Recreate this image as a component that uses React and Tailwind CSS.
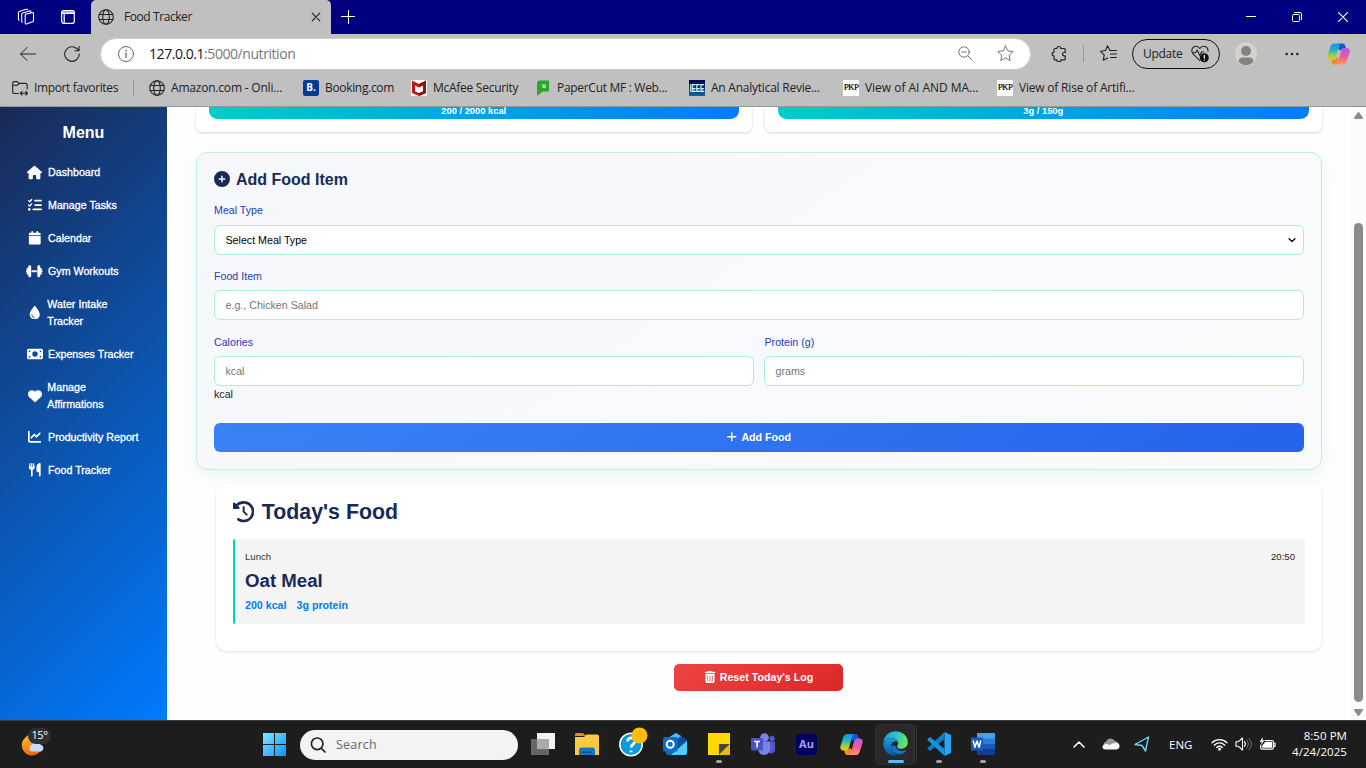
import React from 'react';
import {
  FaHouse, FaListCheck, FaCalendar, FaDumbbell, FaDroplet, FaMoneyBill, FaHeart, FaChartLine,
  FaUtensils, FaCirclePlus, FaClockRotateLeft, FaPlus, FaTrashCan,
} from 'react-icons/fa6';

const line = { fill: 'none', stroke: 'currentColor', strokeLinecap: 'round', strokeLinejoin: 'round' };

function Globe() {
  return (
    <svg className="h-4 w-4 shrink-0 text-[#222]" viewBox="0 0 16 16" {...line} strokeWidth="1.1">
      <circle cx="8" cy="8" r="7.3" />
      <ellipse cx="8" cy="8" rx="3.3" ry="7.3" />
      <path d="M1.2 5.5h13.6M1.2 10.5h13.6" />
    </svg>
  );
}

function CopilotIcon({ id, className }) {
  return (
    <svg className={className} viewBox="0 0 24 24">
      <defs>
        <linearGradient id={id + 'a'} x1="0" y1="0" x2="0" y2="1">
          <stop offset="0" stopColor="#1b8df0" /><stop offset=".4" stopColor="#22b5c0" />
          <stop offset=".75" stopColor="#a9cf3c" /><stop offset="1" stopColor="#f5c518" />
        </linearGradient>
        <linearGradient id={id + 'b'} x1="0" y1="0" x2="0" y2="1">
          <stop offset="0" stopColor="#a95cf0" /><stop offset=".5" stopColor="#ee5a9c" />
          <stop offset="1" stopColor="#ff9a55" />
        </linearGradient>
      </defs>
      <path d="M12 1h4.200c1.500 0 2.300.8 2.700 2.200l1 3.300h-3c-1.500 0-2.500.7-3 2.200L12 7z" fill="#1555c8" />
      <path d="M12 23H7.800c-1.500 0-2.300-.8-2.700-2.200l-1-3.300h3c1.500 0 2.500-.7 3-2.200L12 17z" fill="#f08a30" />
      <path d="M8 1h7.500c-1.500.2-2.300 1-2.700 2.500L9.300 15.300c-.6 2-1.500 2.900-3.300 2.900H3.700C.8 18.200-.3 16 .6 13.300L3.600 4c.7-2 2.200-3 4.400-3z" fill={`url(#${id}a)`} />
      <path d="M16 23H8.500c1.500-.2 2.300-1 2.700-2.500l3.500-11.800c.6-2 1.500-2.900 3.300-2.900h2.300c2.900 0 4 2.200 3.100 4.900l-3 9.300c-.7 2-2.200 3-4.400 3z" fill={`url(#${id}b)`} />
    </svg>
  );
}

function TitleBar() {
  return (
    <div className="flex h-[34px] items-center bg-[#000080] text-white">
      <svg className="ml-[17px] h-[18px] w-[18px]" viewBox="0 0 18 18" {...line} strokeWidth="1.1">
        <path d="M8.300 6.200 15 4.600c.8-.2 1.500.2 1.500 1v6.800c0 .7-.4 1.200-1 1.400l-6 2.200c-.8.200-1.300-.2-1.300-1V7.300c0-.6.3-1 .9-1.200z" />
        <path d="M5.500 14.200c-.5-.1-.8-.5-.8-1V6.300c0-.6.4-1 1-1.200l6.800-2.200c.7-.2 1.200 0 1.400.6" />
        <path d="M2.300 12.200c-.5-.1-.9-.4-.9-1V4.700c0-.6.3-1 .9-1.200L9 1.300c.7-.2 1.200 0 1.500.5" />
      </svg>
      <svg className="ml-[26px] h-[14px] w-[14px]" viewBox="0 0 14 14" {...line} strokeWidth="1.2">
        <rect x=".7" y=".7" width="12.600" height="12.600" rx="2" />
        <path d="M1 2.200h12M1 3.500h12M3.200 4v9" />
      </svg>
      <div className="ml-[16px] flex h-[34px] w-[240px] items-center rounded-t-[5px] bg-[#c0c0c0] pl-[7px] pr-[10px] text-[#222]">
        <Globe />
        <span className="ml-[10px] text-[12px] tracking-[-0.42px]">Food Tracker</span>
        <svg className="ml-auto h-[10px] w-[10px]" viewBox="0 0 10 10" {...line} strokeWidth="1.2"><path d="m1.200 1.200 7.600 7.600m0-7.600L1.200 8.800" /></svg>
      </div>
      <svg className="ml-[10px] h-[14px] w-[14px]" viewBox="0 0 14 14" {...line} strokeWidth="1.1"><path d="M7.500.5v13M.5 6.500h13" /></svg>
      <svg className="ml-auto h-[10px] w-[10px]" viewBox="0 0 10 10" {...line}><path d="M0 4.500h10" /></svg>
      <svg className="ml-[36px] h-[10px] w-[10px]" viewBox="0 0 10 10" {...line}>
        <rect x=".5" y="2.500" width="7" height="7" rx="1" /><path d="M2.500.5H8A1.500 1.500 0 0 1 9.500 2v5.500" />
      </svg>
      <svg className="ml-[36px] mr-[18px] h-[10px] w-[10px]" viewBox="0 0 10 10" {...line} strokeWidth="1.100"><path d="m.3.3 9.400 9.400m0-9.400L.3 9.700" /></svg>
    </div>
  );
}

function Toolbar() {
  return (
    <div className="flex h-[39px] items-center bg-[#c0c0c0] text-[#222]">
      <svg className="ml-[20px] h-4 w-4" viewBox="0 0 16 16" {...line} strokeWidth="1"><path d="M15.500 8H.8M7 1.500.6 8 7 14.500" /></svg>
      <svg className="ml-[28px] h-4 w-4" viewBox="0 0 16 16" {...line} strokeWidth="1.100"><path d="M15.300 8A7.300 7.300 0 1 1 12.800 2.500L15 4.600M15 .5v4.200h-4.200" /></svg>
      <div className="ml-[20px] flex h-[32px] w-[931px] items-center rounded-full border border-[#d0d0d0] bg-white pl-[17px] pr-[16px] text-[#666]">
        <svg className="h-4 w-4" viewBox="0 0 16 16" {...line}><circle cx="8" cy="8" r="7.500" /><path d="M8 7.200v4.300" strokeWidth="1.300" /><path d="M8 4.600v.1" strokeWidth="1.600" /></svg>
        <span className="ml-[15px] text-[14px] tracking-[-0.44px] text-[#777]"><span className="text-[#111]">127.0.0.1</span>:5000/nutrition</span>
        <svg className="ml-auto h-[15px] w-[15px]" viewBox="0 0 15 15" {...line} strokeWidth="0.900"><circle cx="6" cy="6" r="5.200" /><path d="m9.800 9.800 4.500 4.500M3.700 6h4.600" /></svg>
        <svg className="ml-[24px] h-[17px] w-[17px]" viewBox="0 0 17 17" {...line} strokeWidth="0.900"><path d="m8.500.9 2.300 4.900 5.400.7-4 3.700 1 5.300-4.700-2.600-4.700 2.600 1-5.300-4-3.700 5.400-.7z" /></svg>
      </div>
      <svg className="ml-[20px] h-[17px] w-[17px]" viewBox="0 0 17 17" {...line} strokeWidth="1.200">
        <path d="M5.800 3.500a2 2 0 0 1 4 0h3.400c.6 0 1 .4 1 1v3h-1a1.700 1.700 0 0 0 0 3.400h1v3c0 .6-.4 1-1 1H9.800a2 2 0 0 1-4 0H4c-.6 0-1-.4-1-1v-3a1.900 1.900 0 0 1 0-3.800V4.500c0-.6.400-1 1-1z" />
      </svg>
      <div className="ml-[15px] h-[17px] w-px bg-[#999]" />
      <svg className="ml-[16px] h-[17px] w-[17px]" viewBox="0 0 17 17" {...line} strokeWidth="1.100">
        <path d="M10 5.500 7.500.8 5.500 5.500.6 6.300l3.600 3.600-.9 5.300 4.300-2.300M10 5.500h6.500M10.500 9h6M10.500 12.500h6" />
      </svg>
      <div className="ml-[15px] flex h-[30px] w-[88px] items-center rounded-full border border-[#111] pl-[10px]">
        <span className="text-[12px] tracking-[-0.3px]">Update</span>
        <svg className="ml-[9px] h-[18px] w-[18px]" viewBox="0 0 18 18" {...line} strokeWidth="1.100">
          <path d="M8.800 15.600 2.300 9.200C-.5 6.200 1 1.500 4.800 1.200c1.800-.1 3.200.9 4 2.300.8-1.400 2.300-2.400 4.200-2.300 2.600.2 4.300 2.500 4 5M2 7.800h2.500L6.200 5l2.600 5.500L10.600 7h2" />
          <circle cx="13.300" cy="12.800" r="4.500" fill="#111" stroke="none" /><path d="M13.300 10.300v2.800m0 2v.1" stroke="white" strokeWidth="1.200" />
        </svg>
      </div>
      <svg className="ml-[15px] h-[24px] w-[22px]" viewBox="0 0 22 24">
        <ellipse cx="11" cy="12" rx="11" ry="12" fill="#d5d2ce" /><circle cx="11" cy="9" r="5" fill="#87827d" />
        <path d="M3.500 19.500c0-3 2.500-4 4-4h7c1.500 0 4 1 4 4-4 5-11 5-15 0z" fill="#87827d" />
      </svg>
      <svg className="ml-[28px] h-[4px] w-[14px]" viewBox="0 0 14 4" fill="#222"><circle cx="1.700" cy="2" r="1.300" /><circle cx="7" cy="2" r="1.300" /><circle cx="12.300" cy="2" r="1.300" /></svg>
      <CopilotIcon id="ct" className="ml-[28px] h-[24px] w-[23px]" />
    </div>
  );
}

function Favorite({ icon, label, className, track }) {
  return (
    <div className={`flex shrink-0 items-center gap-[6px] ${className}`}>
      {icon}
      <span className={`whitespace-nowrap ${track}`}>{label}</span>
    </div>
  );
}

const pkp = <span className="flex h-4 w-4 shrink-0 items-center justify-center bg-white font-['Liberation_Serif',serif] text-[9px] tracking-[-0.6px] text-black [-webkit-text-stroke:0.2px_black]">PKP</span>;

function FavoritesBar() {
  return (
    <div className="flex h-[33px] items-center bg-[#c0c0c0] pb-[4px] text-[12px] text-[#222]">
      <Favorite className="ml-[12px] w-[121px]" track="tracking-[-0.37px]" label="Import favorites" icon={
        <svg className="h-4 w-4 shrink-0" viewBox="0 0 16 16" {...line} strokeWidth="1.100">
          <path d="M6.500 13.500H2.300c-1 0-1.600-.6-1.600-1.600V3.200c0-1 .6-1.600 1.600-1.600H5l2 1.800h6.500c1 0 1.700.6 1.700 1.600v4M.8 5.300h4.400L7 3.500M8.500 13.200h7M10 11.500l-1.700 1.700L10 15M13.800 11.500l1.700 1.700-1.700 1.800" />
        </svg>} />
      <div className="h-4 w-px bg-[#999]" />
      <Favorite className="ml-[15px] w-[154px]" track="tracking-[-0.2px]" label="Amazon.com - Onli..." icon={<Globe />} />
      <Favorite className="w-[108px]" track="tracking-[-0.33px]" label="Booking.com" icon={<span className="flex h-4 w-4 shrink-0 items-center justify-center rounded-[2px] bg-[#003b95] text-[10px] font-bold text-white">B.</span>} />
      <Favorite className="w-[124px]" track="tracking-[-0.27px]" label="McAfee Security" icon={
        <svg className="h-4 w-4 shrink-0" viewBox="0 0 16 16"><path fill="#fff" d="M0 0h16v16H0z" /><path fill="#c01818" d="m1 .5 7 3.500 7-3.500V13l-7 3-7-3z" /><path fill="#8b1010" d="M15 .5 8 4v12l7-3z" /><path fill="#fff" d="M4 5.500 8 7.500l4-2v5.800L8 13l-4-1.700z" /></svg>} />
      <Favorite className="w-[154px]" track="tracking-[-0.3px]" label="PaperCut MF : Web..." icon={
        <svg className="h-4 w-4 shrink-0" viewBox="0 0 16 16"><path fill="#2aa82a" fillRule="evenodd" d="M4.500.5H14v11H8L2 15.800V3C2 1.500 3 .5 4.500.5zm2.700 3.700v3.900h3.600V4.200z" /></svg>} />
      <Favorite className="w-[154px]" track="tracking-[-0.24px]" label="An Analytical Revie..." icon={
        <svg className="h-4 w-4 shrink-0" viewBox="0 0 16 16">
          <defs><linearGradient id="ieee" x1="0" y1="0" x2="0" y2="1"><stop stopColor="#000048" /><stop offset="1" stopColor="#006aa0" /></linearGradient></defs>
          <path d="M0 0h16v16H0z" fill="url(#ieee)" />
          <text x="8" y="11.500" textAnchor="middle" textLength="14.500" lengthAdjust="spacingAndGlyphs" fontFamily="Liberation Sans, sans-serif" fontWeight="700" fontSize="10" fill="white">IEEE</text>
        </svg>} />
      <Favorite className="w-[154px]" track="tracking-[-0.03px]" label="View of AI AND MA..." icon={pkp} />
      <Favorite className="w-[154px]" track="tracking-[-0.2px]" label="View of Rise of Artifi..." icon={pkp} />
    </div>
  );
}

const menu = [
  [FaHouse, 'Dashboard', 'text-[15px]'],
  [FaListCheck, 'Manage Tasks', 'text-[14px]'],
  [FaCalendar, 'Calendar', 'text-[13.500px]'],
  [FaDumbbell, 'Gym Workouts', 'text-[16.500px] stroke-[14]'],
  [FaDroplet, 'Water Intake Tracker', 'text-[13.500px]'],
  [FaMoneyBill, 'Expenses Tracker', 'text-[16px]'],
  [FaHeart, 'Manage Affirmations', 'text-[14px]'],
  [FaChartLine, 'Productivity Report', 'text-[13.500px]'],
  [FaUtensils, 'Food Tracker', 'text-[13.500px]'],
];

function Sidebar() {
  return (
    <nav className="w-[167px] shrink-0 bg-[linear-gradient(135deg,#192a56,#007bff)] text-white">
      <h2 className="pt-[15px] text-center text-[16px] font-bold leading-[22px]">Menu</h2>
      <ul className="mt-[12px] pl-[27px]">
        {menu.map(([Icon, label, size]) => (
          <li key={label} className="flex items-center py-[8px]">
            <span className="mb-[1px] flex h-[16px] w-[15px] shrink-0 items-center justify-center"><Icon className={`shrink-0 ${size}`} /></span>
            <span className={`w-[96px] text-[10.670px] leading-[17px] tracking-[0.02px] [-webkit-text-stroke:0.3px_white] ${label.length > 18 && label !== 'Productivity Report' ? 'ml-[5.300px]' : 'ml-[6px]'}`}>{label}</span>
          </li>
        ))}
      </ul>
    </nav>
  );
}

function Progress({ label }) {
  return (
    <div className="min-w-0 flex-1 rounded-b-[6px] bg-white px-[13px] shadow-[0_1px_3px_rgba(0,0,0,0.16)]">
      <div className="h-[12px] rounded-b-[8.500px] bg-[linear-gradient(90deg,#00cec9,#007bff)] text-center text-[9.330px] font-bold leading-[9px] text-white">{label}</div>
    </div>
  );
}

const box = 'flex h-[30px] items-center rounded-[6px] border border-[#a7f3d0] bg-white px-[10.500px] text-[10.670px] leading-[16px]';
const labelCls = 'h-[15px] text-[10.670px] leading-[15px] text-[#1e40af]';

function FoodForm() {
  return (
    <section className="mt-[20px] h-[318px] rounded-[11px] border border-[#c6ece1] bg-[linear-gradient(145deg,#f5f7fb,#f8fafc)] px-[17px] shadow-[0_5px_17px_rgba(16,185,129,0.1)]">
      <h3 className="flex h-[20px] items-center text-[16px] font-bold leading-[20px] text-[#192a56] mt-[16px]">
        <FaCirclePlus className="mr-[6px]" /><span className="pt-[1px]">Add Food Item</span>
      </h3>
      <div className={`mt-[14px] ${labelCls}`}>Meal Type</div>
      <div className={`mt-[7px] justify-between text-black ${box}`}>
        Select Meal Type
        <svg className="mr-[-3px] h-[5px] w-[8px]" viewBox="0 0 8 5" {...line} strokeWidth="1.200"><path d="m1 .7 3 2.800 3-2.800" /></svg>
      </div>
      <div className={`mt-[14px] ${labelCls}`}>Food Item</div>
      <div className={`mt-[6px] text-[#757575] ${box}`}>e.g., Chicken Salad</div>
      <div className="mt-[15px] grid grid-cols-2 gap-[10px]">
        <div>
          <div className={labelCls}>Calories</div>
          <div className={`mt-[6px] text-[#757575] ${box}`}>kcal</div>
          <div className="text-[10.670px] leading-[16px] text-[#222]">kcal</div>
        </div>
        <div>
          <div className={`pl-[0.500px] ${labelCls}`}>Protein (g)</div>
          <div className={`mt-[6px] text-[#757575] ${box}`}>grams</div>
        </div>
      </div>
      <div className="mt-[21px] flex h-[29px] items-center justify-center rounded-[6px] bg-[linear-gradient(145deg,#3b82f6,#2563eb)] pb-[1px] pr-[1px] text-[10.670px] font-bold text-white">
        <FaPlus className="mr-[4px] text-[11.500px]" />Add Food
      </div>
    </section>
  );
}

function FoodLog() {
  return (
    <section className="ml-[20px] mt-[13px] h-[168px] rounded-[11px] bg-white px-[17px] shadow-[0_1px_3px_rgba(0,0,0,0.12)]">
      <h2 className="flex items-center pt-[15px] text-[21.330px] font-bold leading-[28px] text-[#192a56]">
        <FaClockRotateLeft className="mr-[7.500px]" /><span className="whitespace-nowrap">Today&apos;s Food</span>
      </h2>
      <div className="mt-[13px] h-[85px] rounded-[2px] border-l-2 border-[#00cec9] bg-[#f4f4f4] pl-[10px] pr-[10px] pt-[10px]">
        <div className="flex justify-between text-[9.600px] leading-[15px] text-[#333]"><span>Lunch</span><span className="text-[#222]">20:50</span></div>
        <div className="mt-[5px] text-[18.670px] font-bold leading-[24px] text-[#192a56]">Oat Meal</div>
        <div className="mt-[4px] flex gap-[10px] text-[10.670px] font-bold leading-[16px] text-[#007bff]"><span>200 kcal</span><span>3g protein</span></div>
      </div>
    </section>
  );
}

function Page() {
  return (
    <div className="flex h-[613px] overflow-hidden font-['Liberation_Sans',Arial,sans-serif]">
      <Sidebar />
      <main className="min-w-0 flex-1 bg-[#fefefe] pl-[29px] pr-[29px]">
        <div className="ml-[-0.500px] mr-[0.500px] flex h-[25px] gap-[13px]"><Progress label="200 / 2000 kcal" /><Progress label="3g / 150g" /></div>
        <FoodForm />
        <FoodLog />
        <div className="ml-[478px] mt-[13px] flex h-[27px] w-[169px] items-center justify-center rounded-[5px] bg-[linear-gradient(145deg,#ef4444,#dc2626)] pb-[1px] text-[10.670px] font-bold text-white">
          <FaTrashCan className="mr-[4px] text-[12px]" />Reset Today&apos;s Log
        </div>
      </main>
      <div className="flex w-[15px] shrink-0 flex-col items-center bg-[#fcfcfc] text-[#8b8b8b]">
        <svg className="mt-[5px] h-[7px] w-[9px]" viewBox="0 0 9 7" fill="currentColor"><path d="M3.700.6a1 1 0 0 1 1.600 0L8.800 5.500c.4.700 0 1.500-.8 1.500H1C.2 7-.2 6.200.2 5.500z" /></svg>
        <div className="mt-[104px] h-[479px] w-[9px] rounded-full bg-[#8b8b8b]" />
        <svg className="mt-[7px] h-[7px] w-[9px]" viewBox="0 0 9 7" fill="currentColor"><path d="M3.700 6.400a1 1 0 0 0 1.600 0l3.500-4.900C9.200.8 8.800 0 8 0H1C.2 0-.2.8.2 1.500z" /></svg>
      </div>
    </div>
  );
}

const apps = [
  ['task', <><path d="M6 1h18v16H6z" fill="#f3f3f3" /><path d="M0 7h18v16H0z" fill="#666" /><path d="M6 7h12v10H6z" fill="#aaa" /></>],
  ['files', <><path d="M0 2.500C0 1.700.7 1 1.500 1H8l3 3H0z" fill="#d8950b" /><path d="M0 5h9l2.500-2.500H22A2 2 0 0 1 24 4.500V23H0z" fill="#fcc944" /><path d="M4 23v-5a2.500 2.500 0 0 1 2.500-2.500h11A2.500 2.500 0 0 1 20 18v5z" fill="#1176cc" /><path d="M7 19.500h10v1.500H7z" fill="#064a83" /></>],
  ['help', <><circle cx="12" cy="12.500" r="11.200" fill="#0b9bdb" stroke="white" strokeWidth="1.500" /><path d="M8.500 9.500c0-5 8-4.500 7.500 0-.2 2.500-4 3-4 6M12 18.500v1.800" fill="none" stroke="white" strokeWidth="2.800" /><circle cx="20.500" cy="3.500" r="8" fill="#ffbd0b" /></>],
  ['outlook', <><path d="m3 7 10-6 11 7v12.500A2.500 2.500 0 0 1 21.500 23h-16A2.500 2.500 0 0 1 3 20.500z" fill="#1268bd" /><path d="m5 6 8-5 5 3-9 6z" fill="#56b6f0" /><path d="m12 9 7-4 5 3-10 9z" fill="#0f4c99" /><path d="m8 23 16-14v11.500A2.500 2.500 0 0 1 21.500 23z" fill="#4bd0fb" /><rect y="5" width="14.500" height="14.500" rx="1.500" fill="#0f6cc9" /><circle cx="7.200" cy="12.200" r="3.500" fill="none" stroke="white" strokeWidth="2" /></>],
  ['notes', <><path d="M1 1h22v22H1z" fill="#ffd900" /><path d="M12 23V12h11z" fill="#454545" /><path d="M12 23 23 12v11z" fill="#f5b800" /></>],
  ['teams', <><circle cx="13.500" cy="5.500" r="4.300" fill="#7b83eb" /><circle cx="21" cy="6.500" r="2.700" fill="#5059c9" /><path d="M17 9.500h7v8a4 4 0 0 1-6 3.500z" fill="#5059c9" /><path d="M7 9.500h12V17a6 6 0 0 1-12 0z" fill="#7b83eb" /><rect y="6" width="12" height="12.500" rx="1" fill="#4b53bc" /><path d="M3.200 9.500h5.800M6.100 9.500v6" stroke="white" strokeWidth="1.600" /></>],
];

function TaskApp({ children, running }) {
  return (
    <div className="flex h-full w-[44px] shrink-0 flex-col items-center pt-[11px]">
      <div className="h-[24px] w-[24px]">{children}</div>
      {running && <div className="mt-[4px] h-[3px] w-[6px] rounded-full bg-[#a0a0a0]" />}
    </div>
  );
}

function Taskbar() {
  return (
    <div className="flex h-[48px] items-center border-t border-[#3a3d3d] bg-[#1d1d1d] font-['Open_Sans',sans-serif] text-white">
      <div className="relative ml-[21px] h-[32px] w-[32px]">
        <svg className="h-[32px] w-[32px]" viewBox="0 0 32 32">
          <defs><linearGradient id="sun" x1="0" y1="0" x2=".3" y2="1"><stop stopColor="#ffc52d" /><stop offset="1" stopColor="#f06a13" /></linearGradient></defs>
          <path d="M5 8a10.200 10.200 0 1 0 16 10C14 17 8 13 9 5a9 9 0 0 0-4 3z" fill="url(#sun)" />
          <path d="M11 22.500a3.500 3.500 0 0 1-.5-6.600 5 5 0 0 1 9-.5 3.700 3.700 0 0 1 .5 7.100z" fill="#c9dcfb" />
        </svg>
        <span className="absolute left-[7px] top-[-1px] flex h-[16px] w-[23px] items-center justify-center rounded-full bg-[#303030] text-[11px] tracking-[-0.4px]">15°</span>
      </div>
      <svg className="ml-[209px] h-[24px] w-[24px]" viewBox="0 0 24 24">
        <defs><linearGradient id="win" x1="0" y1="0" x2="1" y2="1"><stop stopColor="#7deaff" /><stop offset="1" stopColor="#0a95fb" /></linearGradient></defs>
        <path d="M1 0h11v11H1zM13 0h11v11H13zM1 12h11v11H1zM13 12h11v11H13z" fill="url(#win)" />
      </svg>
      <div className="ml-[14px] flex h-[30px] w-[218px] items-center rounded-full bg-[#f3f3f3] pl-[10px]">
        <svg className="h-[16px] w-[16px] text-[#222]" viewBox="0 0 16 16" {...line} strokeWidth="1.700"><circle cx="7.200" cy="6.800" r="5.800" /><path d="m11.500 11.500 3.500 3.500" /></svg>
        <span className="ml-[10px] pt-[1px] text-[12.500px] tracking-[0.2px] text-[#666]">Search</span>
      </div>
      <div className="ml-[3px] flex h-full">
        {apps.map(([name, art]) => (
          <TaskApp key={name} running={name === 'notes'}><svg className="h-[24px] w-[24px] overflow-visible" viewBox="0 0 24 24">{art}</svg></TaskApp>
        ))}
        <TaskApp><div className="ml-[1px] mt-[2px] flex h-[21px] w-[21px] items-center justify-center rounded-[4px] bg-[#00005b] text-[11px] font-bold text-[#a5a2ff]">Au</div></TaskApp>
        <TaskApp><CopilotIcon id="cb" className="ml-[1px] mt-[1px] h-[23px] w-[23px]" /></TaskApp>
        <div className="flex w-[44px] shrink-0 pl-[3px]">
          <div className="mt-[4px] flex h-[39px] w-[38px] shrink-0 flex-col items-center rounded-[4px] border-r border-[#343434] bg-[#292929] pl-[2px] pt-[6px] shadow-[0_0_0_1px_#303030]">
            <svg className="h-[25px] w-[25px] shrink-0" viewBox="0 0 24 24">
              <defs>
                <linearGradient id="edge" x1="0" y1="0" x2="1" y2=".2"><stop stopColor="#1597df" /><stop offset=".6" stopColor="#32c6c6" /><stop offset="1" stopColor="#69e35a" /></linearGradient>
                <linearGradient id="edgeb" x1="0" y1="0" x2="0" y2="1"><stop stopColor="#1b9de2" /><stop offset="1" stopColor="#0b4fa8" /></linearGradient>
              </defs>
              <path d="M.3 11C1 4.500 6 .2 12 .2c7 0 11.800 5 11.800 10.500 0 4-3 6.300-6.300 6.300-2.500 0-4-1-4-2 0-.8 1-1.200 1-3C14.500 9.500 12.300 7 8.500 7 4 7 1 9 .3 11z" fill="url(#edge)" />
              <path d="M7 14c0 5 4 8.500 9 8.500 2.500 0 5-1.500 6.200-3.500.2-.5-.2-.7-.7-.5-4 1.500-8.500.5-9.500-4z" fill="#1670c5" />
              <path d="M.3 11.500C1.500 8.500 4.500 7 8.300 7c2.700 0 4.500 1.500 5.400 3-3.200-1-6.200 1.400-6.200 5.200 0 4 3 7.200 6.500 8.400C6 25 0 19 .3 11.500z" fill="url(#edgeb)" />
            </svg>
            <div className="mt-[4px] h-[3px] w-[16px] shrink-0 rounded-full bg-[#4cc2ff]" />
          </div>
          <div className="mt-[4px] h-[39px] w-[3px] rounded-r-[4px] border-r border-[#383838]" />
        </div>
        <TaskApp running><svg className="h-[24px] w-[24px]" viewBox="0 0 24 24"><path d="M17.500 0 24 3v18l-6.500 3z" fill="#27a6f1" /><path d="M17.500 0v7L3 19l-2.500-2v-1z" fill="#087fcb" /><path d="M.5 8v-1L3 5l14.500 12v7z" fill="#1593de" /></svg></TaskApp>
        <TaskApp running>
          <svg className="h-[24px] w-[24px]" viewBox="0 0 24 24"><path d="M6 1h18v6H6z" fill="#41a5ee" /><path d="M6 6.500h18V12H6z" fill="#2b7cd3" /><path d="M6 12h18v5.500H6z" fill="#185abd" /><path d="M6 17.500h18V23H6z" fill="#103f91" /><path d="M0 5.500h12v13H0z" fill="#185abd" /><path d="m2.300 9 1.600 6.300L6 9l2.100 6.300L9.700 9" {...line} stroke="white" strokeWidth="1.500" /></svg>
        </TaskApp>
      </div>
      <div className="ml-auto flex items-center pb-[1px] pr-[19px]">
        <svg className="h-[7px] w-[12px]" viewBox="0 0 12 7" {...line} strokeWidth="1.500"><path d="m1 6 5-5 5 5" /></svg>
        <svg className="ml-[17px] h-[12px] w-[18px]" viewBox="0 0 18 12"><path d="M2 8A3.500 3.500 0 0 1 4 3.500 5 5 0 0 1 13 3c2 .3 3.500 2 3.500 4z" fill="#999" /><path d="M3.500 11.500C-.5 11.500-.5 6.500 3.500 6c2-.2 3 .5 4 1l4.500-2c3-1 6 .5 5.500 3.500-.2 2-1.500 3-3.500 3z" fill="#f5f5f5" /></svg>
        <svg className="ml-[14px] h-[16px] w-[16px]" viewBox="0 0 16 16" {...line} stroke="#71d7f2" strokeWidth="1.400"><path d="M14.500 1 1 8.500l7 1 3.500 5.500z" /></svg>
        <span className="ml-[19px] w-[24px] pt-[1px] text-[11.500px]">ENG</span>
        <svg className="ml-[18px] h-[13px] w-[17px]" viewBox="0 0 17 13" {...line} strokeWidth="1.300"><path d="M1 4.800c4.300-4.200 10.700-4.200 15 0M3.300 7.200c3-3 7.400-3 10.400 0M5.700 9.500c1.700-1.700 3.900-1.700 5.600 0" /><circle cx="8.500" cy="11.300" r=".8" fill="white" /></svg>
        <svg className="ml-[7px] h-[14px] w-[17px]" viewBox="0 0 17 14" {...line} strokeWidth="1.100"><path d="M1 4.700h2.500L7.500 1v12l-4-3.700H1z" /><path d="M9.500 4.700c1 1.300 1 3.300 0 4.600" /><path d="M11.700 3c2 2.500 2 5.500 0 8M14 1.500c3 3.500 3 7.500 0 11" stroke="#666" /></svg>
        <svg className="ml-[7px] h-[14px] w-[17px]" viewBox="0 0 17 14" {...line} strokeWidth="1.200"><path d="M6 3.500h7c.8 0 1.300.5 1.300 1.300v6c0 .8-.5 1.300-1.300 1.300H3c-.8 0-1.300-.5-1.300-1.300V8M14.500 6h1.500v3.500h-1.500" /><path d="M6.500 4.800h6.500v6H3.200V8.500z" fill="white" stroke="none" /><path d="M3.800 0 .6 4.700h2L2 8l3.500-4.700h-2z" fill="white" stroke="none" /></svg>
        <div className="ml-[12px] w-[59px] whitespace-nowrap text-right text-[11.500px] leading-[16px] tracking-[0.05px]"><div>8:50 PM</div><div>4/24/2025</div></div>
      </div>
    </div>
  );
}

export default function App() {
  return (
    <div className="flex h-[768px] w-[1366px] flex-col overflow-hidden bg-white">
      <div className="font-['Open_Sans',sans-serif]">
        <TitleBar />
        <Toolbar />
        <FavoritesBar />
      </div>
      <div className="h-px shrink-0 bg-[#969696]" />
      <Page />
      <Taskbar />
    </div>
  );
}
